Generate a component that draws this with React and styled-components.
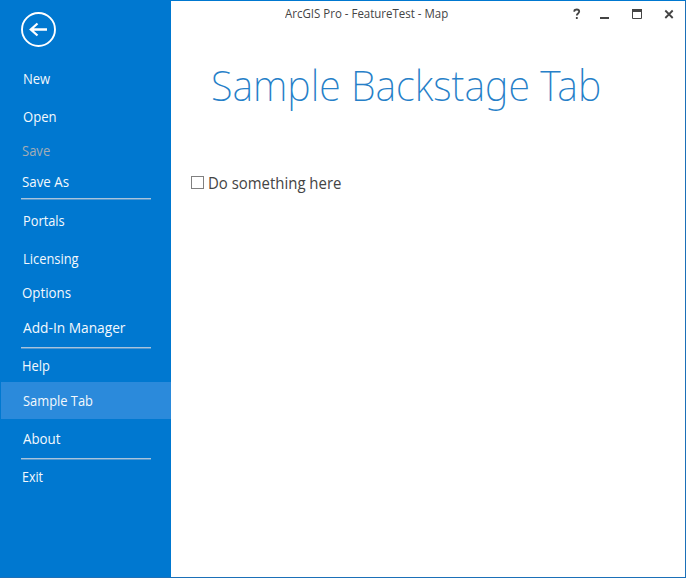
import React from "react";
import styled, { createGlobalStyle } from "styled-components";

const GlobalStyle = createGlobalStyle`
  * { box-sizing: border-box; }
  body { margin: 0; background: #fff; font-family: "Open Sans", "Noto Sans", sans-serif; }
`;

const Window = styled.div`
  display: flex;
  width: 686px;
  height: 578px;
  background: #fff;
  border: 1px solid #0078d0;
  border-right-color: #1b70b8;
  border-bottom-color: #1b70b8;
  overflow: hidden;
`;

const Sidebar = styled.nav`
  display: flex;
  flex-direction: column;
  flex: none;
  width: 170px;
  background: #0078d0;
`;

const BackButton = styled.button`
  flex: none;
  width: 36px;
  height: 36px;
  margin: 11px 0 12px 20px;
  padding: 0;
  border: 0;
  background: none;
  svg { display: block; }
`;

const MenuItem = styled.div`
  display: flex;
  align-items: center;
  flex: none;
  height: ${(p) => p.$height}px;
  padding: ${(p) => p.$drop}px 0 0 ${(p) => p.$indent}px;
  background: ${(p) => (p.$selected ? "#2b8adb" : "transparent")};
  color: ${(p) => (p.$disabled ? "#a3adb6" : "#f4f9fd")};
  font-size: 14px;
  line-height: 20px;
  white-space: nowrap;
`;

const Condensed = styled.span`
  display: inline-block;
  transform: scaleX(${(p) => p.$stretch});
  transform-origin: left;
`;

const Divider = styled.div`
  flex: none;
  width: 130px;
  height: 2px;
  margin-top: ${(p) => p.$gap}px;
  margin-left: 20px;
  background: #4e98d2;
  border-top: 1px solid #a8c4dc;
`;

const Main = styled.main`
  flex: 1;
  min-width: 0;
`;

const TitleBar = styled.header`
  display: flex;
  align-items: center;
  height: 25px;
  padding-left: 114px;
`;

const WindowTitle = styled.div`
  width: 284px;
  color: #444;
  font-size: 12px;
  line-height: 18px;
  white-space: nowrap;
`;

const Controls = styled.div`
  display: flex;
  svg { display: block; }
`;

const Heading = styled.h1`
  margin: 27px 0 0 40px;
  color: #2680c8;
  font-family: "Noto Sans", "Open Sans", sans-serif;
  font-size: 42px;
  line-height: 64px;
  font-weight: 200;
  white-space: nowrap;
`;

const Option = styled.label`
  display: flex;
  align-items: center;
  margin: 54px 0 0 20px;
  height: 24px;
  color: #444;
  font-size: 16px;
  white-space: nowrap;
`;

const CheckBox = styled.input`
  appearance: none;
  flex: none;
  width: 13px;
  height: 13px;
  margin: 0 4px 1px 0;
  border: 1px solid #808080;
  background: #fff;
`;

const ITEMS = [
  { label: "New", height: 38, indent: 22, stretch: 0.93 },
  { label: "Open", height: 38, indent: 22, stretch: 0.935 },
  { label: "Save", height: 30, indent: 21, disabled: true, stretch: 0.93 },
  { label: "Save As", height: 32, indent: 21, stretch: 0.95 },
  { divider: true },
  { label: "Portals", height: 42, indent: 22, stretch: 0.915 },
  { label: "Licensing", height: 34, indent: 22, stretch: 0.92 },
  { label: "Options", height: 34, indent: 21, stretch: 0.95 },
  { label: "Add-In Manager", height: 36, indent: 22, stretch: 0.98 },
  { divider: true, gap: 1 },
  { label: "Help", height: 33, indent: 21, stretch: 0.92, drop: 1 },
  { label: "Sample Tab", height: 37, indent: 22, selected: true, stretch: 0.92, drop: 1 },
  { label: "About", height: 39, indent: 22, stretch: 0.95, drop: 1 },
  { divider: true },
  { label: "Exit", height: 34, indent: 21, stretch: 0.89 },
];

export default function App() {
  return (
    <>
      <GlobalStyle />
      <Window>
        <Sidebar>
          <BackButton aria-label="Back">
            <svg width="36" height="36" viewBox="0 0 36 36" fill="none" stroke="#fff">
              <circle cx="17.5" cy="17.5" r="16.5" strokeWidth="1.9" />
              <path d="M26 17.5H10M16.5 11.5L9.8 17.5L16.5 23.5" strokeWidth="2.3" />
            </svg>
          </BackButton>
          {ITEMS.map((item, i) =>
            item.divider ? (
              <Divider key={i} $gap={item.gap ?? 0} />
            ) : (
              <MenuItem
                key={i}
                $height={item.height}
                $indent={item.indent}
                $drop={item.drop ?? 0}
                $selected={item.selected}
                $disabled={item.disabled}
              >
                <Condensed $stretch={item.stretch}>{item.label}</Condensed>
              </MenuItem>
            )
          )}
        </Sidebar>
        <Main>
          <TitleBar>
            <WindowTitle>
              <Condensed $stretch={0.957}>ArcGIS Pro - FeatureTest - Map</Condensed>
            </WindowTitle>
            <Controls>
              <svg width="110" height="24" viewBox="569 1 110 24" fill="none" stroke="#444">
                <path d="M574.3 10.8V10.2C574.3 8.9 575.4 8.5 576.8 8.5C578.2 8.5 579.2 9.2 579.2 10.5C579.2 12.5 576.8 12.4 576.8 14.6M576.8 16V18" strokeWidth="1.8" />
                <path d="M600 17H609" strokeWidth="2" />
                <path d="M632.5 9V17.5H641.5V9" strokeWidth="1" />
                <path d="M632 9.5H642" strokeWidth="3" />
                <path d="M665.3 9.5L672.7 17M672.7 9.5L665.3 17" strokeWidth="1.8" />
              </svg>
            </Controls>
          </TitleBar>
          <Heading>
            <Condensed $stretch={0.94}>Sample Backstage Tab</Condensed>
          </Heading>
          <Option>
            <CheckBox type="checkbox" />
            <Condensed $stretch={0.933}>Do something here</Condensed>
          </Option>
        </Main>
      </Window>
    </>
  );
}
